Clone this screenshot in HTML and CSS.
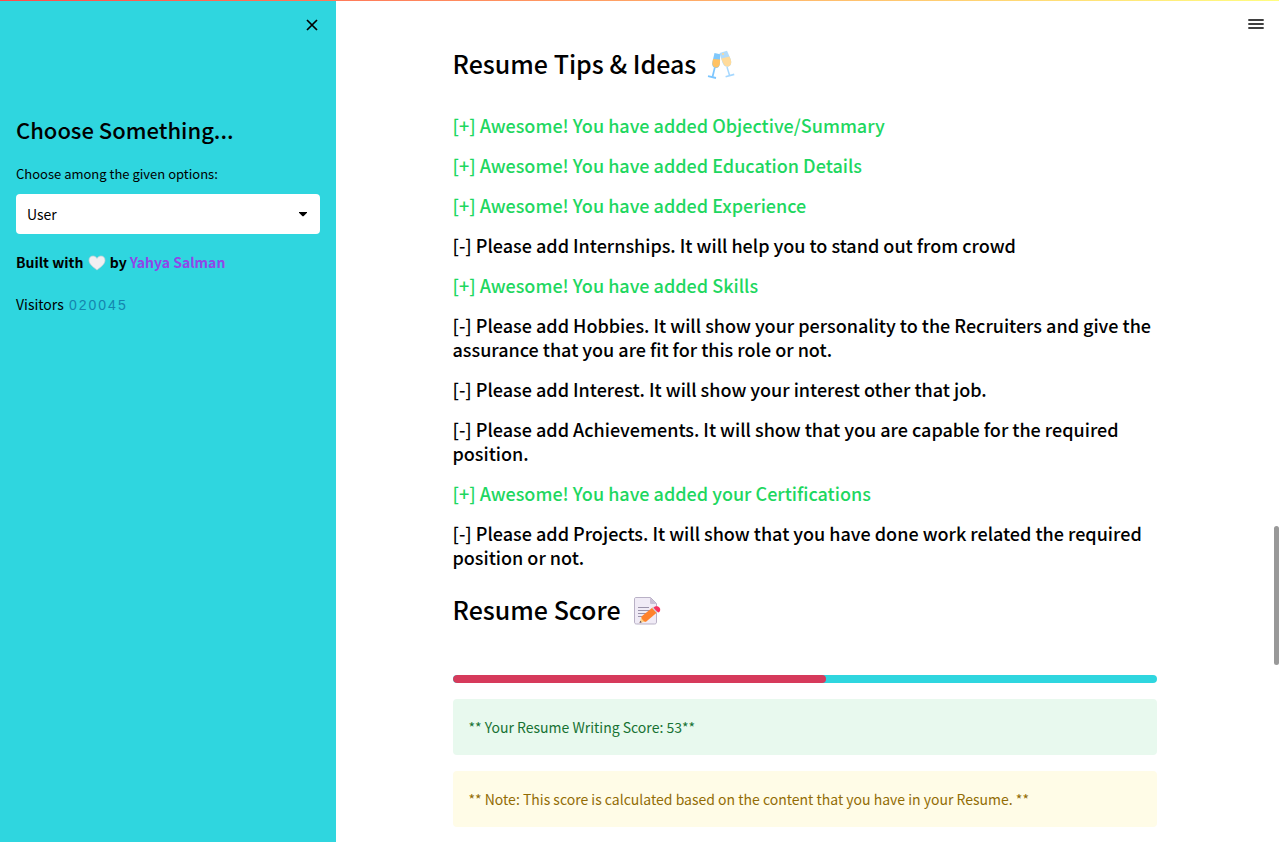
FILE: index.html
```html
<!DOCTYPE html>
<html lang="en">
<head>
<meta charset="utf-8">
<meta name="viewport" content="width=device-width, initial-scale=1">
<title>Resume Analyzer</title>
<link rel="stylesheet" href="styles.css">
</head>
<body>
<div class="decoration"></div>
<div class="app">
  <aside class="sidebar">
    <button class="close" type="button" aria-label="Close sidebar">
      <svg class="close-icon" viewBox="0 0 12 12"><path d="M1 1l10 10M11 1L1 11"/></svg>
    </button>
    <h2 class="sidebar-title">Choose Something...</h2>
    <label class="field-label" for="role">Choose among the given options:</label>
    <div class="select-box">
      <select id="role" class="select"><option>User</option><option>Admin</option></select>
      <svg class="caret" viewBox="0 0 8 5"><path d="M0 0h8v.8L4.500 4.200h-1L0 .8z"/></svg>
    </div>
    <p class="credit">Built with
      <svg class="heart" viewBox="0 0 18 16" role="img" aria-label="heart"><path d="M9 15C6 12.500 1 9.500 1 5.200 1 2.600 2.800 1 5 1c1.800 0 3.200 1 4 2.400C9.800 2 11.200 1 13 1c2.200 0 4 1.600 4 4.200C17 9.500 12 12.500 9 15z" fill="#f1eff2" stroke="#c9cdd2" stroke-width=".7"/></svg>
      by <a class="credit-link" href="#author">Yahya Salman</a></p>
    <p class="visitors">Visitors <span class="counter"><span>0</span><span>2</span><span>0</span><span>0</span><span>4</span><span>5</span></span></p>
  </aside>

  <main class="main">
    <button class="menu" type="button" aria-label="Menu">
      <svg class="menu-icon" viewBox="0 0 16 12"><path d="M.3 2h15.400M.3 6h15.400M.3 10h15.400"/></svg>
    </button>
    <div class="content">
      <h2 class="title">Resume Tips &amp; Ideas
        <svg class="emoji" viewBox="0 0 28 30" role="img" aria-label="clinking glasses">
          <g>
            <path d="M20 17l2.600 8.500" stroke="#a6d8ff" stroke-width="1.500"/>
            <path d="M18.600 26.800l8.600-2.400" stroke="#a6d8ff" stroke-width="1.700"/>
            <path d="M12.500 3L20 .8l3.500 8c1.500 4.200.5 6.800-1.800 7.600-2.600.9-5.200-.5-6.300-4z" fill="#b3dcfa"/>
            <path d="M14.200 8.600l8.300-2 1.100 2.600c1.400 3.800.3 6.200-1.900 7-2.300.8-4.700-.4-5.700-3.400z" fill="#ffdb9b"/>
            <circle cx="16" cy="4" r="1" fill="#ffd995"/>
          </g>
          <path d="M7.800 17.500L5.500 27" stroke="#7cc6ff" stroke-width="1.700"/>
          <path d="M1 26.200l8 1.800" stroke="#7cc6ff" stroke-width="1.800"/>
          <path d="M7.500 3l5.700 1.200-.3 9.200c-.3 3.700-2.400 5-4.700 4.500-2.500-.6-3.500-2.800-2.800-6z" fill="#80c8fb"/>
          <path d="M6 9l7.100.6-.2 4c-.4 2.900-2.200 4.300-4.500 3.800-2.300-.5-3.600-2.400-2.900-5.300z" fill="#ffc264"/>
        </svg>
      </h2>
      <div class="tips">
        <h5 class="tip good">[+] Awesome! You have added Objective/Summary</h5>
        <h5 class="tip good">[+] Awesome! You have added Education Details</h5>
        <h5 class="tip good">[+] Awesome! You have added Experience</h5>
        <h5 class="tip">[-] Please add Internships. It will help you to stand out from crowd</h5>
        <h5 class="tip good">[+] Awesome! You have added Skills</h5>
        <h5 class="tip">[-] Please add Hobbies. It will show your personality to the Recruiters and give the assurance that you are fit for this role or not.</h5>
        <h5 class="tip">[-] Please add Interest. It will show your interest other that job.</h5>
        <h5 class="tip">[-] Please add Achievements. It will show that you are capable for the required position.</h5>
        <h5 class="tip good">[+] Awesome! You have added your Certifications</h5>
        <h5 class="tip">[-] Please add Projects. It will show that you have done work related the required position or not.</h5>
      </div>
      <h2 class="title score-title">Resume Score
        <svg class="emoji" viewBox="0 0 28 30" role="img" aria-label="memo">
          <path d="M3 1.500h14.500l6 6V26c0 1.300-.7 2-2 2H3.500c-1.300 0-2-.7-2-2V3c0-1 .5-1.500 1.500-1.500z" fill="#f0ebf6" stroke="#b9b1c6"/>
          <path d="M17 1.500v5c0 1 .5 1.500 1.500 1.500h5z" fill="#c9bfd5"/>
          <path d="M5 11.500h11M5 14.500h14M5 17.500h10M5 20.500h6" stroke="#9b93ab" stroke-width="1.200"/>
          <path d="M6.500 27l2-6.500 4.500 5z" fill="#ffd08a"/>
          <path d="M8.500 20.500L19.500 11.500l4.500 5L13 25.800c-1.500.5-5-3-4.500-5.300z" fill="#ff822d"/>
          <path d="M19 12l2-1.600 4.500 5.200-2 1.500z" fill="#d3d3d8"/>
          <path d="M20.700 11.500c1.500-1.700 4.200-1.600 5.700 0 1.400 1.600 1 3.900-.7 5.100-1.500-.8-4.500-3.500-5-5.100z" fill="#f8315f"/>
          <path d="M6.500 27l.7-2.200 1.600 1.500z" fill="#55495f"/>
        </svg>
      </h2>
      <div class="progress" role="progressbar" aria-valuenow="53" aria-valuemin="0" aria-valuemax="100"><div class="progress-fill" style="width:53%"></div></div>
      <p class="alert success">** Your Resume Writing Score: 53**</p>
      <p class="alert warning">** Note: This score is calculated based on the content that you have in your Resume. **</p>
    </div>
    <div class="scroll-thumb"></div>
  </main>
</div>
</body>
</html>
```
FILE: styles.css
```css
* { box-sizing: border-box; }
body {
  margin: 0;
  background: #fff;
  color: #000;
  font-family: "Noto Sans CJK SC", "Noto Sans", sans-serif;
  font-size: 14px;
  line-height: 24px;
}
h2, h5, p { margin: 0; }
button { border: 0; padding: 0; background: none; color: inherit; display: flex; }
svg { fill: none; }

.decoration {
  position: absolute;
  inset: 0 0 auto;
  height: 1px;
  background: linear-gradient(90deg, #ff4b4b, #fffd80);
  z-index: 2;
}
.app { display: flex; min-height: 100vh; }

.sidebar {
  flex: 0 0 336px;
  padding: 18px 16px;
  background: #2fd6df;
}
.close { margin: 0 0 0 auto; padding: 1px 2px; }
.close-icon { width: 12px; height: 12px; stroke: #000; stroke-width: 1.700; }
.sidebar-title {
  margin-top: 82px;
  font-size: 22px;
  line-height: 30px;
  font-weight: 500;
}
.field-label {
  display: block;
  margin-top: 18px;
  font-size: 13px;
  line-height: 24px;
}
.select-box { position: relative; margin-top: 8px; }
.select {
  display: block;
  width: 100%;
  height: 40px;
  padding: 0 11px;
  border: 0;
  border-radius: 4px;
  appearance: none;
  background: #fff;
  color: #000;
  font: inherit;
}
.caret { position: absolute; right: 13px; top: 18px; width: 8px; height: 5px; fill: #000; }
.credit { margin-top: 16px; font-weight: 700; }
.heart { width: 18px; height: 16px; margin: 0 1px; vertical-align: -3px; }
.credit-link { color: #9146e8; text-decoration: none; }
.visitors { margin-top: 18px; }
.counter {
  display: inline-flex;
  gap: 2px;
  margin-left: 2px;
  color: #1485ae;
  font-family: "Liberation Sans", Arial, sans-serif;
  font-size: 14px;
}

.main { position: relative; flex: 1; min-width: 0; padding: 43px 22px 16px 16px; }
.menu { position: absolute; top: 18px; right: 15px; }
.menu-icon { width: 16px; height: 12px; stroke: #000; stroke-width: 1.700; }
.content { max-width: 704px; margin: 0 auto; }
.title {
  font-size: 25px;
  line-height: 40px;
  font-weight: 500;
}
.emoji { width: 28px; height: 30px; margin-left: 5px; vertical-align: -6px; }
.tips { display: grid; gap: 16px; margin-top: 30px; }
.tip { font-size: 18px; line-height: 24px; font-weight: 500; }
.good { color: #1ed760; }
.score-title { margin-top: 20px; }
.score-title .emoji { margin-left: 7px; }
.progress { height: 8px; margin-top: 46px; border-radius: 4px; background: #2fd6df; overflow: hidden; }
.progress-fill { height: 8px; border-radius: 4px; background: #d63a5b; }
.alert { margin-top: 16px; padding: 16px; border-radius: 4px; }
.success { background: #e8f9ee; color: #177233; }
.warning { background: #fffce7; color: #926c05; }
.scroll-thumb {
  position: absolute;
  top: 526px;
  right: 0;
  width: 5px;
  height: 139px;
  border-radius: 3px;
  background: #999;
}
```
